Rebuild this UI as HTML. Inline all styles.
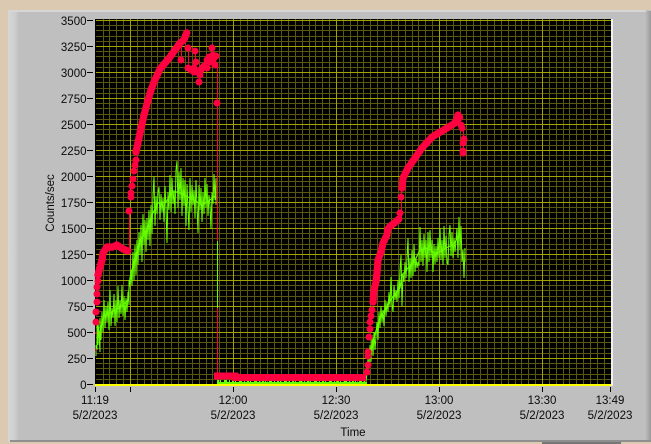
<!DOCTYPE html>
<html><head><meta charset="utf-8">
<style>
html,body{margin:0;padding:0;width:651px;height:444px;overflow:hidden;background:#dbcab1}
svg{display:block}
text{font-family:"Liberation Sans",sans-serif;font-size:11.5px;fill:#0a0a0a}
</style></head><body>
<svg width="651" height="444" viewBox="0 0 651 444" xmlns="http://www.w3.org/2000/svg">
<defs>
<linearGradient id="lg" x1="0" x2="1" y1="0" y2="0"><stop offset="0" stop-color="#d6d6d6"/><stop offset=".6" stop-color="#cfcfcf"/><stop offset="1" stop-color="#bfbfbf"/></linearGradient>
<linearGradient id="rg" x1="0" x2="1" y1="0" y2="0"><stop offset="0" stop-color="#bfbfbf"/><stop offset="1" stop-color="#9a9a9a"/></linearGradient>
</defs>
<rect width="651" height="444" fill="#dbcab1"/>
<rect x="8" y="10" width="643" height="432" fill="#bfbfbf"/>
<rect x="8" y="10" width="11" height="432" fill="url(#lg)"/>
<rect x="645" y="11" width="6" height="431" fill="url(#rg)"/>
<rect x="8" y="10" width="638" height="2" fill="#d6d6d6"/>
<rect x="10" y="440" width="641" height="2" fill="#8f8f8f"/>
<rect x="542" y="442" width="79" height="2" fill="#777"/>

<rect x="95" y="19" width="516" height="366" fill="#000"/>
<!-- minor grid -->
<path shape-rendering="crispEdges" stroke="#5a580e" stroke-width="1" fill="none" d="M96 25.5H611M96 30.5H611M96 36.5H611M96 41.5H611M96 51.5H611M96 56.5H611M96 62.5H611M96 67.5H611M96 77.5H611M96 82.5H611M96 88.5H611M96 93.5H611M96 103.5H611M96 108.5H611M96 114.5H611M96 119.5H611M96 129.5H611M96 134.5H611M96 140.5H611M96 145.5H611M96 155.5H611M96 160.5H611M96 166.5H611M96 171.5H611M96 181.5H611M96 186.5H611M96 192.5H611M96 197.5H611M96 207.5H611M96 212.5H611M96 218.5H611M96 223.5H611M96 233.5H611M96 238.5H611M96 244.5H611M96 249.5H611M96 259.5H611M96 264.5H611M96 270.5H611M96 275.5H611M96 285.5H611M96 290.5H611M96 296.5H611M96 301.5H611M96 311.5H611M96 316.5H611M96 322.5H611M96 327.5H611M96 337.5H611M96 342.5H611M96 348.5H611M96 353.5H611M96 363.5H611M96 368.5H611M96 374.5H611M96 379.5H611
M103.5 19V384M109.5 19V384M116.5 19V384M123.5 19V384M137.5 19V384M144.5 19V384M151.5 19V384M157.5 19V384M164.5 19V384M171.5 19V384M178.5 19V384M185.5 19V384M192.5 19V384M199.5 19V384M206.5 19V384M212.5 19V384M219.5 19V384M226.5 19V384M240.5 19V384M247.5 19V384M254.5 19V384M260.5 19V384M267.5 19V384M274.5 19V384M281.5 19V384M288.5 19V384M295.5 19V384M302.5 19V384M309.5 19V384M315.5 19V384M322.5 19V384M329.5 19V384M343.5 19V384M350.5 19V384M357.5 19V384M363.5 19V384M370.5 19V384M377.5 19V384M384.5 19V384M391.5 19V384M398.5 19V384M405.5 19V384M412.5 19V384M418.5 19V384M425.5 19V384M432.5 19V384M446.5 19V384M453.5 19V384M460.5 19V384M466.5 19V384M473.5 19V384M480.5 19V384M487.5 19V384M494.5 19V384M501.5 19V384M508.5 19V384M515.5 19V384M521.5 19V384M528.5 19V384M535.5 19V384M549.5 19V384M556.5 19V384M563.5 19V384M569.5 19V384M576.5 19V384M583.5 19V384M590.5 19V384M597.5 19V384M604.5 19V384"/>
<!-- major grid -->
<path shape-rendering="crispEdges" stroke="#a3a300" stroke-width="1" fill="none" d="M96 20.5H611M96 46.5H611M96 72.5H611M96 98.5H611M96 124.5H611M96 150.5H611M96 176.5H611M96 202.5H611M96 228.5H611M96 254.5H611M96 280.5H611M96 306.5H611M96 332.5H611M96 358.5H611M130.5 19V384M233.5 19V384M336.5 19V384M439.5 19V384M542.5 19V384"/>
<rect x="611" y="19" width="2" height="367" fill="#efefef"/>

<!-- green trace 1 -->
<path fill="none" stroke="#66ff00" stroke-width="1" d="M96 356L96 345 97 350 97 325 98 345 98 322 99 335 100 352 100 318 101 340 102 312 103 332 104 300 105 328 106 306 107 322 108 302 109 330 110 290 111 326 112 308 113 318 114 294 115 326 116 300 117 322 118 286 119 318 120 300 121 314 122 285 123 316 124 296 125 320 126 298 127 312 128 292 129 305 129 280 130 284 131 270 132 286 133 252 134 280 135 245 136 275 137 240 138 265 139 232 140 255 141 225 142 262 143 214 144 245 145 220 146 252 147 218 148 240 149 210 150 246 151 205 152 234 153 195 154 177 155 226 156 196 157 214 158 192 159 187 160 220 161 194 162 212 163 198 164 222 165 186 166 208 167 243 168 192 169 210 170 175 171 212 172 178 173 204 174 190 175 214 176 170 177 161 178 208 179 172 180 200 181 168 182 216 183 178 184 206 185 180 186 226 187 184 188 210 189 230 190 178 191 212 192 185 193 205 194 190 195 218 196 180 197 206 198 233 199 185 200 210 201 188 202 222 203 192 204 214 205 178 206 208 207 184 208 216 209 195 210 206 211 229 212 192 213 204 214 174 215 200 216 178 216 205"/>
<path fill="none" stroke="#66ff00" stroke-width="1.2" d="M98 338L104 316 112 312 122 306 128 300 130 278 135 258 140 240 146 232 152 215 158 203 166 202 172 192 178 192 186 196 194 200 202 205 210 200 215 196"/>
<!-- green trace 2 -->
<path fill="none" stroke="#66ff00" stroke-width="1" d="M366 382L367 372 368 358 369 368 370 345 371 362 372 335 373 356 374 332 375 350 376 336 377 322 378 340 379 312 380 328 381 306 382 322 383 310 384 326 385 300 386 316 387 302 388 312 389 292 390 306 391 277 392 304 393 312 394 285 395 300 396 290 397 302 398 280 399 298 400 270 401 255 402 306 403 274 404 282 405 262 406 278 407 258 408 238 409 282 410 258 411 278 412 250 413 276 414 244 415 272 416 258 417 268 418 262 419 266 420 227 421 262 422 240 423 266 424 234 425 258 426 240 427 272 428 232 429 262 430 230 431 258 432 240 433 272 434 244 435 264 436 246 437 262 438 238 439 258 440 228 441 260 442 240 443 265 444 226 445 258 446 236 447 262 448 265 449 235 450 225 451 256 452 232 453 258 454 238 455 252 456 240 457 228 458 258 459 217 460 250 461 226 462 262 463 250 464 278 465 248 465 262"/>
<path fill="none" stroke="#66ff00" stroke-width="1.2" d="M370 352L375 334 380 318 386 308 392 298 400 288 402 275 408 268 414 262 420 250 428 248 436 254 446 248 454 244 459 235"/>
<!-- green baseline noise -->
<path fill="none" stroke="#66ff00" stroke-width="2" d="M217 383H367"/>
<path fill="none" stroke="#66ff00" stroke-width="2" stroke-dasharray="2 1 1 3 3 2 1 2" d="M217 381H367"/>

<!-- red thin lines -->
<g fill="#ff0040">
<rect x="129" y="211" width="1" height="39"/>
<rect x="181" y="45" width="1" height="15"/>
<rect x="188" y="48" width="1" height="20"/>
<rect x="195" y="51" width="1" height="21"/>
<rect x="212" y="48" width="1" height="12"/>
<rect x="215" y="65" width="3" height="1"/>
<rect x="217" y="65" width="1" height="313"/>
<rect x="401" y="188" width="1" height="31"/>
<rect x="463" y="125" width="1" height="28"/>
</g>
<rect x="217" y="241" width="1" height="67" fill="#66ff00"/>
<!-- red dots sparse -->
<path fill="none" stroke="#ff0040" stroke-width="2" stroke-linecap="round" d="M96 350h0M96 333h0"/>
<path fill="none" stroke="#ff0040" stroke-width="7" stroke-linecap="round" d="M96 322h0M96 312h0M97 302h0M97 294h0M97 287h0M98 281h0M98 275h0M129 211h0M131 197h0M131 193h0M132 186h0M133 179h0M134 171h0M135 165h0M136 160h0M181 60h0M188 48h0M195 51h0M188 68h0M191 70h0M194 68h0M196 62h0M194 72h0M197 72h0M200 75h0M199 82h0M201 70h0M202 68h0M204 66h0M207 68h0M207 60h0M209 57h0M212 48h0M213 55h0M210 62h0M214 58h0M216 56h0M215 65h0M213 62h0M217 103h0M400 213h0M401 197h0M367 372h0M368 365h0M368 356h0M368 352h0M369 337h0M370 329h0M370 322h0M371 316h0M372 310h0M373 302h0M462 128h0M463 143h0M464 139h0M463 153h0M463 151h0M461 125h0"/>
<!-- red dense bands -->
<path fill="none" stroke="#ff0040" stroke-width="7.5" stroke-linecap="round" stroke-dasharray="0 2.5" d="M98 275L100 267 102 260 103 253 107 247 113 247 117 245 123 249 128 251"/>
<path fill="none" stroke="#ff0040" stroke-width="7.5" stroke-linecap="round" stroke-dasharray="0 3" d="M136 152L140 133 144 115 150 93 154 82 160 69 170 57 180 43 184 40 187 32"/>
<path fill="none" stroke="#ff0040" stroke-width="7.5" stroke-linecap="round" stroke-dasharray="0 3" d="M373 302L374 290 376 282 377 273 378 260 381 252 383 243 387 235 388 228 393 224 399 219"/>
<path fill="none" stroke="#ff0040" stroke-width="7.5" stroke-linecap="round" stroke-dasharray="0 3" d="M402 188L403 178 408 168 415 158 422 148 432 137 442 131 452 125 456 122 458 115 460 118"/>
<path fill="none" stroke="#ff0040" stroke-width="7" d="M214 376H235V377.5H366"/>

<!-- baseline -->
<rect x="95" y="384" width="516" height="2" fill="#ffff00"/>

<!-- ticks -->
<path shape-rendering="crispEdges" stroke="#000" stroke-width="1" fill="none" d="M87 20.5H93M87 46.5H93M87 72.5H93M87 98.5H93M87 124.5H93M87 150.5H93M87 176.5H93M87 202.5H93M87 228.5H93M87 254.5H93M87 280.5H93M87 306.5H93M87 332.5H93M87 358.5H93M87 384.5H93M95.5 387V392M130.5 387V392M233.5 387V392M336.5 387V392M439.5 387V392M542.5 387V392M610.5 387V392"/>

<!-- y labels -->
<g text-anchor="end">
<text x="86.5" y="25">3500</text><text x="86.5" y="51">3250</text><text x="86.5" y="77">3000</text><text x="86.5" y="103">2750</text><text x="86.5" y="129">2500</text><text x="86.5" y="155">2250</text><text x="86.5" y="181">2000</text><text x="86.5" y="207">1750</text><text x="86.5" y="233">1500</text><text x="86.5" y="259">1250</text><text x="86.5" y="285">1000</text><text x="86.5" y="311">750</text><text x="86.5" y="337">500</text><text x="86.5" y="363">250</text><text x="86.5" y="389">0</text>
</g>
<!-- x labels -->
<g text-anchor="middle">
<text x="95" y="404">11:19</text><text x="95" y="419">5/2/2023</text>
<text x="233" y="404">12:00</text><text x="233" y="419">5/2/2023</text>
<text x="336" y="404">12:30</text><text x="336" y="419">5/2/2023</text>
<text x="439" y="404">13:00</text><text x="439" y="419">5/2/2023</text>
<text x="542" y="404">13:30</text><text x="542" y="419">5/2/2023</text>
<text x="610" y="404">13:49</text><text x="610" y="419">5/2/2023</text>
<text x="353" y="436">Time</text>
<text transform="translate(54 203) rotate(-90)">Counts/sec</text>
</g>
</svg>
</body></html>
